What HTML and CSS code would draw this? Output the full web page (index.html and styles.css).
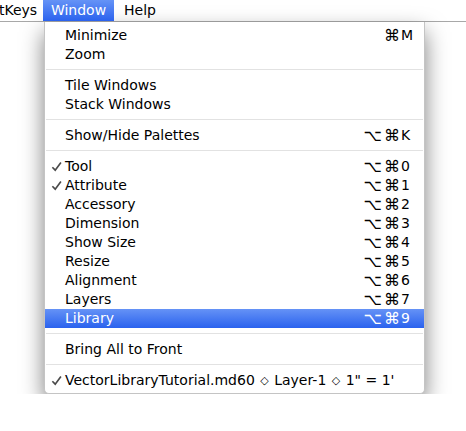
FILE: index.html
```html
<!DOCTYPE html>
<html>
<head>
<meta charset="utf-8">
<link rel="stylesheet" href="styles.css">
</head>
<body>
<div class="menubar">
  <span class="mb-item mb-cut">tKeys</span>
  <span class="mb-item mb-active">Window</span>
  <span class="mb-item">Help</span>
</div>
<div class="menu">
  <div class="row"><span class="chk"></span><span class="lbl">Minimize</span><span class="mods">⌘</span><span class="key">M</span></div>
  <div class="row"><span class="chk"></span><span class="lbl">Zoom</span><span class="mods"></span><span class="key"></span></div>
  <div class="sep"></div>
  <div class="row"><span class="chk"></span><span class="lbl">Tile Windows</span><span class="mods"></span><span class="key"></span></div>
  <div class="row"><span class="chk"></span><span class="lbl">Stack Windows</span><span class="mods"></span><span class="key"></span></div>
  <div class="sep"></div>
  <div class="row"><span class="chk"></span><span class="lbl">Show/Hide Palettes</span><span class="mods">⌥⌘</span><span class="key">K</span></div>
  <div class="sep"></div>
  <div class="row"><span class="chk"><svg viewBox="0 0 12 12" class="tick"><path d="M1.5 6.8 L4.6 10 L10.8 1.6"/></svg></span><span class="lbl">Tool</span><span class="mods">⌥⌘</span><span class="key">0</span></div>
  <div class="row"><span class="chk"><svg viewBox="0 0 12 12" class="tick"><path d="M1.5 6.8 L4.6 10 L10.8 1.6"/></svg></span><span class="lbl">Attribute</span><span class="mods">⌥⌘</span><span class="key">1</span></div>
  <div class="row"><span class="chk"></span><span class="lbl">Accessory</span><span class="mods">⌥⌘</span><span class="key">2</span></div>
  <div class="row"><span class="chk"></span><span class="lbl">Dimension</span><span class="mods">⌥⌘</span><span class="key">3</span></div>
  <div class="row"><span class="chk"></span><span class="lbl">Show Size</span><span class="mods">⌥⌘</span><span class="key">4</span></div>
  <div class="row"><span class="chk"></span><span class="lbl">Resize</span><span class="mods">⌥⌘</span><span class="key">5</span></div>
  <div class="row"><span class="chk"></span><span class="lbl">Alignment</span><span class="mods">⌥⌘</span><span class="key">6</span></div>
  <div class="row"><span class="chk"></span><span class="lbl">Layers</span><span class="mods">⌥⌘</span><span class="key">7</span></div>
  <div class="row selected"><span class="chk"></span><span class="lbl">Library</span><span class="mods">⌥⌘</span><span class="key">9</span></div>
  <div class="sep"></div>
  <div class="row"><span class="chk"></span><span class="lbl">Bring All to Front</span><span class="mods"></span><span class="key"></span></div>
  <div class="sep"></div>
  <div class="row"><span class="chk"><svg viewBox="0 0 12 12" class="tick"><path d="M1.5 6.8 L4.6 10 L10.8 1.6"/></svg></span><span class="lbl">VectorLibraryTutorial.md60 <span class="dia">◇</span> Layer-1 <span class="dia">◇</span> 1" = 1'</span><span class="mods"></span><span class="key"></span></div>
</div>
</body>
</html>
```

FILE: styles.css
```css
html, body {
  margin: 0;
  padding: 0;
  background: #ffffff;
}
body {
  font-family: "DejaVu Sans", "Liberation Sans", sans-serif;
  font-size: 14px;
  color: #000;
}
.menubar {
  display: flex;
  height: 21px;
  border-bottom: 1px solid #a8a8a8;
  background: #ffffff;
  line-height: 21px;
  overflow: hidden;
}
.mb-item {
  display: block;
  padding: 0 10px;
  white-space: nowrap;
}
.mb-cut {
  width: 44px;
  box-sizing: border-box;
  padding: 0;
  margin-left: -1px;
}
.mb-active {
  width: 71px;
  box-sizing: border-box;
  padding: 0;
  text-align: center;
  color: #fff;
  background: linear-gradient(#6593f6, #2b62ee);
}
.menu {
  width: 381px;
  box-sizing: border-box;
  margin-left: 44px;
  padding: 4px 0 3px;
  background: #ffffff;
  border: 1px solid #c4c4c4;
  border-top: none;
  border-radius: 0 0 5px 5px;
  box-shadow: 0 10px 22px rgba(0, 0, 0, 0.5);
}
.row {
  display: grid;
  grid-template-columns: 20px 1fr auto 14px;
  height: 19px;
  line-height: 19px;
  padding-right: 9px;
  white-space: nowrap;
}
.row.selected {
  color: #fff;
  background: linear-gradient(#6592f6, #2a62ee);
}
.chk {
  display: flex;
  align-items: center;
  justify-content: flex-end;
  padding-right: 3px;
}
.tick {
  width: 11px;
  height: 11px;
  fill: none;
  stroke: #4a4a4a;
  stroke-width: 1.8;
}
.mods {
  font-size: 16px;
  text-align: right;
  letter-spacing: 2px;
  margin-right: -1px;
}
.key {
  text-align: left;
}
.dia {
  font-size: 11px;
  vertical-align: 1px;
  padding: 0 1px;
}
.sep {
  height: 1px;
  margin: 5px 1px 6px;
  background: #e2e2e2;
}
```
